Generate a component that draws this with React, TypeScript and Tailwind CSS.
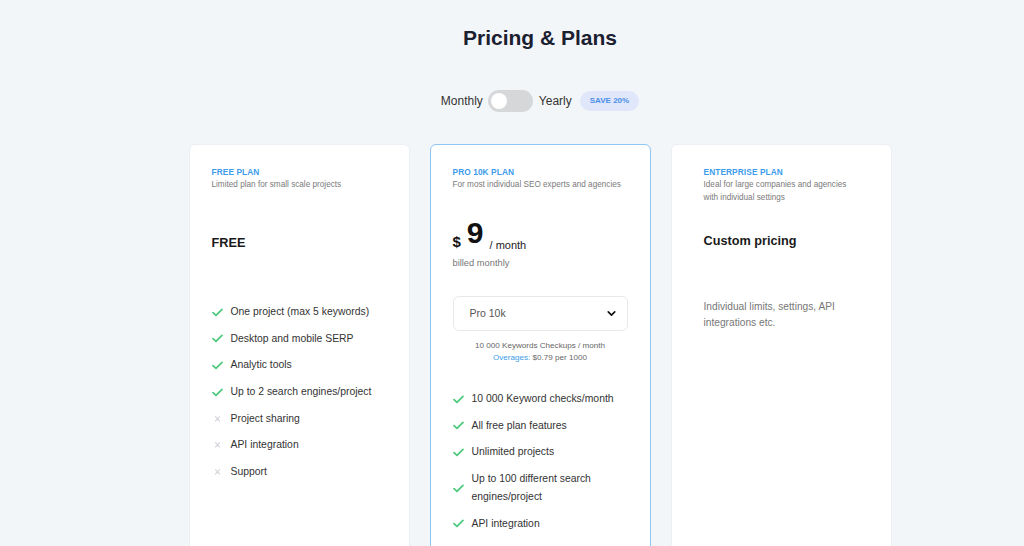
import { ChevronDown } from "lucide-react"

type Feature = { text: string; ok: boolean }

const freeFeatures: Feature[] = [
  { text: "One project (max 5 keywords)", ok: true },
  { text: "Desktop and mobile SERP", ok: true },
  { text: "Analytic tools", ok: true },
  { text: "Up to 2 search engines/project", ok: true },
  { text: "Project sharing", ok: false },
  { text: "API integration", ok: false },
  { text: "Support", ok: false },
]

const proFeatures: Feature[] = [
  { text: "10 000 Keyword checks/month", ok: true },
  { text: "All free plan features", ok: true },
  { text: "Unlimited projects", ok: true },
  { text: "Up to 100 different search engines/project", ok: true },
  { text: "API integration", ok: true },
]

function Check() {
  return (
    <svg viewBox="0 0 12 10" className="w-[11px] h-[9px] shrink-0">
      <path d="M1 5.2 L4.3 8.3 L11 1.5" fill="none" stroke="#4cc97c" strokeWidth="1.9" strokeLinecap="round" strokeLinejoin="round" />
    </svg>
  )
}

function Cross() {
  return (
    <svg viewBox="0 0 10 10" className="w-[11px] h-[8px] shrink-0">
      <path d="M2.5 2 L7.5 7.5 M7.5 2 L2.5 7.5" fill="none" stroke="#d3d6da" strokeWidth="1.4" strokeLinecap="round" />
    </svg>
  )
}

function FeatureList({ items }: { items: Feature[] }) {
  return (
    <ul className="flex flex-col gap-[8.7px]">
      {items.map((f) => (
        <li key={f.text} className="flex items-center gap-[8px] text-[10.4px] leading-[18px] text-[#333]">
          {f.ok ? <Check /> : <Cross />}
          <span>{f.text}</span>
        </li>
      ))}
    </ul>
  )
}

function PlanHead({ label, desc }: { label: string; desc: string[] }) {
  return (
    <div>
      <div className="text-[8.3px] leading-[11px] font-bold tracking-[0.1px] text-[#3d9bea]">{label}</div>
      {desc.map((d) => (
        <div key={d} className="text-[8.2px] leading-[13px] text-[#7a7a7a] whitespace-nowrap">
          {d}
        </div>
      ))}
    </div>
  )
}

export default function App() {
  return (
    <div className="min-h-screen bg-[#f3f6f9] flex flex-col items-center pt-[24px] pl-[56px]" style={{ fontFamily: '"Liberation Sans", Arial, sans-serif' }}>
      <h1 className="text-[21px] leading-[28px] font-bold text-[#1b2030]">Pricing &amp; Plans</h1>

      {/* Billing toggle */}
      <div className="mt-[38px] flex items-center h-[22px]">
        <span className="text-[12px] text-[#333]">Monthly</span>
        <div className="ml-[5px] w-[45px] h-[22px] rounded-full bg-[#d6d7d9] flex items-center px-[3px]">
          <div className="w-[16px] h-[16px] rounded-full bg-white" />
        </div>
        <span className="ml-[6px] text-[12px] text-[#333]">Yearly</span>
        <span className="ml-[8px] h-[20px] px-[10px] rounded-full bg-[#e1e7fb] text-[#4a8fe6] text-[8px] font-bold flex items-center">
          SAVE 20%
        </span>
      </div>

      {/* Cards */}
      <div className="mt-[32px] flex gap-[20px] items-start">
        {/* Free */}
        <div className="w-[221px] h-[460px] bg-white rounded-[6px] border border-[#eceff3] pt-[22px] px-[22px]">
          <PlanHead label="FREE PLAN" desc={["Limited plan for small scale projects"]} />
          <div className="mt-[43px] text-[12.7px] leading-[18px] font-bold text-[#1a1a1a]">FREE</div>
          <div className="mt-[51px]">
            <FeatureList items={freeFeatures} />
          </div>
        </div>

        {/* Pro */}
        <div className="w-[221px] h-[460px] bg-white rounded-[6px] border border-[#8ec6f5] pt-[22px] px-[22px]">
          <PlanHead label="PRO 10K PLAN" desc={["For most individual SEO experts and agencies"]} />
          <div className="mt-[27px] flex items-end text-[#111]">
            <span className="text-[15px] leading-[15px] font-bold">$</span>
            <span className="ml-[6px] mb-[1px] text-[30px] leading-[30px] font-bold">9</span>
            <span className="ml-[6px] -mb-[2px] text-[11px] leading-[11px] text-[#222]">/ month</span>
          </div>
          <div className="mt-[7px] text-[9.3px] leading-[14px] text-[#777]">billed monthly</div>
          <div className="mt-[26px] h-[35px] rounded-[6px] border border-[#e6e8eb] flex items-center justify-between pl-[16px] pr-[9px]">
            <span className="text-[10.5px] text-[#555]">Pro 10k</span>
            <ChevronDown className="w-[13px] h-[13px] text-[#111]" strokeWidth={3} />
          </div>
          <div className="mt-[9px] text-center text-[8.1px] leading-[12px] text-[#666]">
            <div>10 000 Keywords Checkups / month</div>
            <div>
              <span className="text-[#3d9bea]">Overages:</span> $0.79 per 1000
            </div>
          </div>
          <div className="mt-[26px]">
            <FeatureList items={proFeatures} />
          </div>
        </div>

        {/* Enterprise */}
        <div className="w-[221px] h-[460px] bg-white rounded-[6px] border border-[#eceff3] pt-[22px] px-[32px]">
          <PlanHead label="ENTERPRISE PLAN" desc={["Ideal for large companies and agencies", "with individual settings"]} />
          <div className="mt-[28px] text-[12.7px] leading-[18px] font-bold text-[#1a1a1a]">Custom pricing</div>
          <p className="mt-[49px] text-[10.2px] leading-[16px] text-[#777]">Individual limits, settings, API integrations etc.</p>
        </div>
      </div>
    </div>
  )
}
